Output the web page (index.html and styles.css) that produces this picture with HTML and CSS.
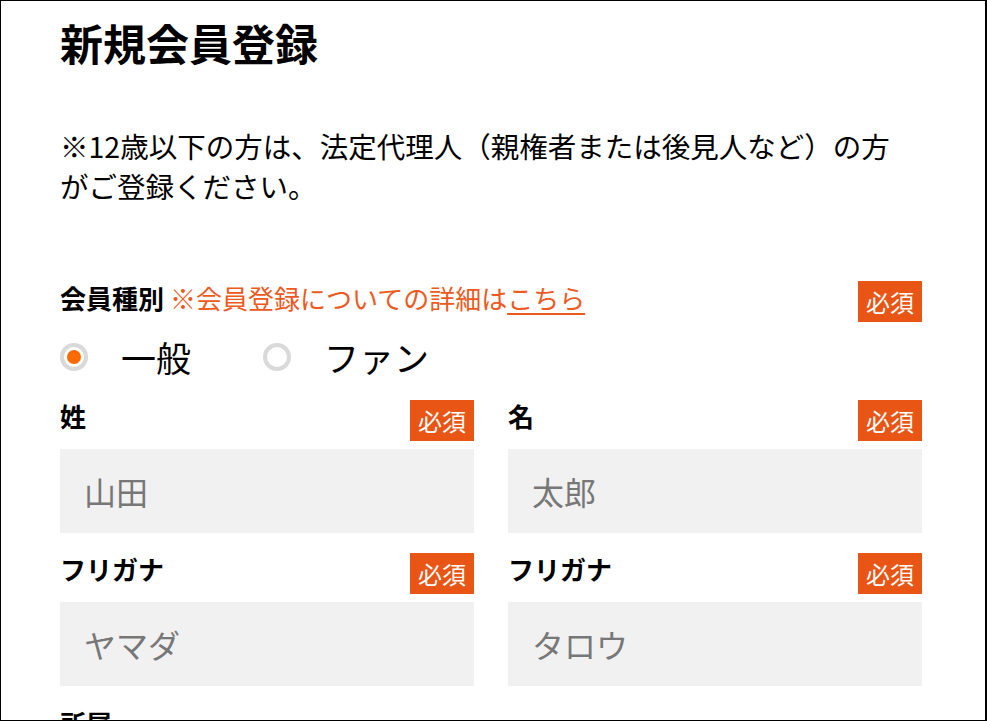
FILE: index.html
```html
<!DOCTYPE html>
<html lang="ja">
<head>
<meta charset="utf-8">
<title>新規会員登録</title>
<link rel="stylesheet" href="styles.css">
</head>
<body>
<div class="frame">
  <main class="page">
    <h1 class="title">新規会員登録</h1>
    <p class="notice">※12歳以下の方は、法定代理人（親権者または後見人など）の方がご登録ください。</p>

    <section class="field field-wide">
      <div class="field-head">
        <div class="field-label">会員種別 <span class="note">※会員登録についての詳細は<a class="note-link" href="#">こちら</a></span></div>
        <span class="badge">必須</span>
      </div>
      <div class="radios">
        <label class="radio"><span class="radio-mark is-checked"></span><span class="radio-text">一般</span></label>
        <label class="radio"><span class="radio-mark"></span><span class="radio-text">ファン</span></label>
      </div>
    </section>

    <div class="grid">
      <section class="field">
        <div class="field-head">
          <div class="field-label">姓</div>
          <span class="badge">必須</span>
        </div>
        <div class="input">山田</div>
      </section>
      <section class="field">
        <div class="field-head">
          <div class="field-label">名</div>
          <span class="badge">必須</span>
        </div>
        <div class="input">太郎</div>
      </section>
      <section class="field">
        <div class="field-head">
          <div class="field-label">フリガナ</div>
          <span class="badge">必須</span>
        </div>
        <div class="input">ヤマダ</div>
      </section>
      <section class="field">
        <div class="field-head">
          <div class="field-label">フリガナ</div>
          <span class="badge">必須</span>
        </div>
        <div class="input">タロウ</div>
      </section>
    </div>

    <section class="field">
      <div class="field-head">
        <div class="field-label">所属</div>
      </div>
    </section>
  </main>
</div>
</body>
</html>
```

FILE: styles.css
```css
html, body {
  margin: 0;
  padding: 0;
  background: #fff;
}

body {
  font-family: "Noto Sans CJK JP", "Noto Sans", sans-serif;
  color: #000;
}

.frame {
  box-sizing: border-box;
  width: 987px;
  height: 721px;
  border: 1px solid #000;
  border-right-width: 2px;
  overflow: hidden;
}

.page {
  padding: 15px 63px 0 59px;
}

.title {
  margin: 0;
  font-size: 43px;
  line-height: 52px;
  font-weight: 700;
}

.notice {
  margin: 58px 0 0;
  max-width: 850px;
  font-size: 28.5px;
  line-height: 40px;
}

.field-wide {
  margin-top: 75px;
}

.field-head {
  display: flex;
  justify-content: space-between;
  align-items: flex-start;
  height: 41px;
}

.field-label {
  font-size: 26px;
  line-height: 33px;
  font-weight: 700;
}

.grid .field-label {
  line-height: 32px;
}

.note {
  font-weight: 400;
  color: #ec5a22;
}

.note-link {
  color: #ec5a22;
  text-decoration: underline;
  text-decoration-thickness: 2px;
  text-underline-offset: 4px;
}

.badge {
  display: block;
  padding: 0 8px;
  background: #e85515;
  color: #fff;
  font-size: 24px;
  line-height: 41px;
}

.radios {
  display: flex;
  align-items: center;
  gap: 72px;
  margin-top: 14px;
  height: 42px;
}

.radio {
  display: flex;
  align-items: center;
  gap: 33px;
}

.radio-mark {
  box-sizing: border-box;
  width: 28px;
  height: 28px;
  border: 4px solid #d9d9d9;
  border-radius: 50%;
  display: flex;
  align-items: center;
  justify-content: center;
}

.radio-mark.is-checked::after {
  content: "";
  width: 14px;
  height: 14px;
  border-radius: 50%;
  background: #ff6a00;
}

.radio-text {
  font-size: 35px;
  line-height: 42px;
}

.grid {
  display: grid;
  grid-template-columns: 1fr 1fr;
  column-gap: 34px;
  row-gap: 20px;
  margin-top: 22px;
}

.input {
  box-sizing: border-box;
  margin-top: 8px;
  height: 84px;
  padding: 0 24px;
  background: #f1f1f1;
  color: #777;
  font-size: 32px;
  display: flex;
  align-items: center;
}

.grid + .field {
  margin-top: 20px;
}
```
